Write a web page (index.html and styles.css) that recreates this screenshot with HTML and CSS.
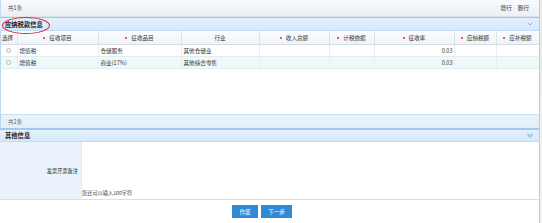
FILE: index.html
```html
<!DOCTYPE html>
<html lang="zh">
<head>
<meta charset="utf-8">
<link rel="stylesheet" href="styles.css">
</head>
<body>
<div class="page">
  <div class="main">
    <div class="toolbar">
      <span class="count">共1条</span>
      <span class="ops"><span>增行</span><span>删行</span></span>
    </div>
    <div class="section-head">
      <span class="title">应纳税款信息</span>
      <svg class="chev" width="6" height="4" viewBox="0 0 6 4"><path d="M0.5 0.5 L3 3 L5.5 0.5" fill="none" stroke="#7fb0de" stroke-width="0.9"/></svg>
      <span class="ellipse"></span>
    </div>
    <div class="grid-wrap">
      <table class="grid">
        <colgroup>
          <col style="width:16px"><col style="width:81px"><col style="width:83px"><col style="width:78px"><col style="width:70px"><col style="width:45px"><col style="width:80px"><col style="width:42px"><col style="width:43px">
        </colgroup>
        <thead>
          <tr>
            <th>选择</th>
            <th><i class="dot"></i>征收项目</th>
            <th><i class="dot"></i>征收品目</th>
            <th>行业</th>
            <th><i class="dot"></i>收入总额</th>
            <th><i class="dot"></i>计税依据</th>
            <th><i class="dot"></i>征收率</th>
            <th><i class="dot"></i>应纳税额</th>
            <th><i class="dot"></i>应补税额</th>
          </tr>
        </thead>
        <tbody>
          <tr>
            <td class="c"><span class="radio"></span></td>
            <td>增值税</td><td>仓储服务</td><td>其他仓储业</td><td></td><td></td><td class="r">0.03</td><td></td><td></td>
          </tr>
          <tr class="alt">
            <td class="c"><span class="radio"></span></td>
            <td>增值税</td><td>商业(17%)</td><td>其他综合零售</td><td></td><td></td><td class="r">0.03</td><td></td><td></td>
          </tr>
        </tbody>
      </table>
    </div>
    <div class="pager">共2条</div>
    <div class="section-head other">
      <span class="title">其他信息</span>
      <svg class="chev2" width="6" height="5" viewBox="0 0 6 5"><path d="M0.5 0.5 L3 2.5 L5.5 0.5 M0.5 2.3 L3 4.3 L5.5 2.3" fill="none" stroke="#6fa6da" stroke-width="0.8"/></svg>
    </div>
    <div class="form-row">
      <div class="label">发票开票备注</div>
      <div class="field"><span class="hint">您还可以输入100字符</span></div>
    </div>
    <div class="actions">
      <button class="btn">作废</button>
      <button class="btn wide">下一步</button>
    </div>
  </div>
  <div class="scrollbar"><div class="thumb"></div></div>
</div>
</body>
</html>
```
FILE: styles.css
```css
html, body {
  margin: 0;
  padding: 0;
  background: #fff;
}
body {
  font-family: "Noto Sans CJK SC", "Noto Sans", sans-serif;
  font-size: 5.6px;
  color: #333;
  width: 542px;
  height: 223px;
  overflow: hidden;
}
.page {
  display: flex;
  height: 223px;
}
.main {
  width: 539px;
  display: flex;
  flex-direction: column;
}
.scrollbar {
  width: 3px;
  background: #f2f2f2;
  border-left: 1px solid #c8c8c8;
  display: flex;
  flex-direction: column;
}
.thumb {
  height: 95px;
  background: #ececec;
}
.toolbar {
  height: 16px;
  display: flex;
  align-items: center;
  justify-content: space-between;
  padding: 0 10px 0 7px;
  background: linear-gradient(#f8fafd, #eaf0f7);
  border-bottom: 1px solid #d7e3ef;
  border-left: 1px solid #c6ddf2;
  color: #555;
}
.ops {
  display: flex;
  gap: 6px;
  color: #333;
}
.section-head {
  position: relative;
  height: 12px;
  display: flex;
  align-items: center;
  justify-content: space-between;
  padding: 0 6px 0 5px;
  background: linear-gradient(#e4f0fc, #d6e9fb);
  border-top: 1px solid #9ec9ef;
  border-bottom: 1px solid #c3dcf2;
}
.title {
  font-weight: bold;
  font-size: 6.3px;
  color: #1a1a1a;
}
.ellipse {
  position: absolute;
  left: 2px;
  top: -1px;
  width: 46px;
  height: 15px;
  border: 1px solid #e0262a;
  border-radius: 50%;
}
.chev, .chev2 {
  display: block;
}
.grid-wrap {
  height: 83px;
  border-left: 1px solid #b9d7f1;
  background: #fff;
}
.grid {
  border-collapse: collapse;
  table-layout: fixed;
  width: 538px;
}
.grid th {
  height: 13px;
  padding: 0;
  font-weight: normal;
  color: #333;
  background: linear-gradient(#fbfcfe, #eef3f8);
  border-right: 1px solid #dbe4ec;
  border-bottom: 1px solid #d3dee8;
  text-align: center;
  white-space: nowrap;
}
.grid th:first-child {
  text-align: left;
  padding-left: 1px;
}
.dot {
  display: inline-block;
  width: 2px;
  height: 2px;
  border-radius: 50%;
  background: #e8262a;
  margin-right: 4px;
  vertical-align: middle;
}
.grid td {
  height: 11px;
  padding: 0 0 0 2px;
  border-right: 1px solid #e6eef2;
  border-bottom: 1px solid #e3ecef;
  white-space: nowrap;
  overflow: hidden;
}
.grid td.c {
  text-align: center;
  padding: 0;
}
.grid td.r {
  text-align: right;
  padding: 0 1px 0 0;
}
.grid tr.alt td {
  background: #f1f8fa;
}
.radio {
  display: inline-block;
  width: 3px;
  height: 3px;
  border: 1px solid #b5b5b5;
  border-radius: 50%;
  background: #fff;
  vertical-align: middle;
}
.pager {
  height: 13px;
  display: flex;
  align-items: center;
  padding-left: 7px;
  color: #666;
  background: linear-gradient(#eaf3fc, #e2eefa);
  border-top: 1px solid #c7def3;
  border-left: 1px solid #b9d7f1;
}
.section-head.other {
  border-top: 2px solid #a2c9ee;
  height: 11px;
}
.form-row {
  display: flex;
  height: 57px;
  border-bottom: 1px solid #cfe5df;
}
.label {
  width: 78px;
  padding-right: 3px;
  background: #eaf3fb;
  border-right: 1px solid #dde9f3;
  display: flex;
  align-items: center;
  justify-content: flex-end;
  color: #222;
  font-size: 5.2px;
}
.field {
  flex: 1;
  display: flex;
  align-items: flex-end;
  padding-bottom: 3px;
  color: #444;
  font-size: 5.2px;
}
.actions {
  display: flex;
  justify-content: center;
  gap: 3px;
  padding: 5px 15px 0 0;
}
.btn {
  height: 13px;
  width: 26px;
  border: none;
  padding: 0;
  background: #2f8ad6;
  color: #fff;
  font-family: inherit;
  font-size: 5.6px;
}
.btn.wide {
  width: 31px;
}
```
